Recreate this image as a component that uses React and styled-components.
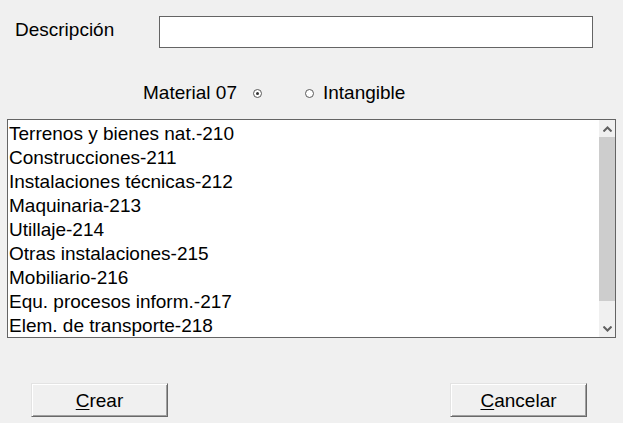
import styled, { createGlobalStyle } from "styled-components";

const GlobalStyle = createGlobalStyle`
  html, body {
    margin: 0;
    padding: 0;
    background: #f0f0f0;
  }
  #root {
    width: 623px;
    height: 423px;
    overflow: hidden;
  }
`;

const items = [
  "Terrenos y bienes nat.-210",
  "Construcciones-211",
  "Instalaciones técnicas-212",
  "Maquinaria-213",
  "Utillaje-214",
  "Otras instalaciones-215",
  "Mobiliario-216",
  "Equ. procesos inform.-217",
  "Elem. de transporte-218",
];

export default function App() {
  return (
    <>
      <GlobalStyle />
      <Dialog>
        <FieldRow>
          <Label>Descripción</Label>
          <TextBox type="text" />
        </FieldRow>

        <RadioRow>
          <RadioLabel>Material 07</RadioLabel>
          <Radio $checked $before={16} $after={0} />
          <Radio $before={43} $after={9} />
          <RadioLabel>Intangible</RadioLabel>
        </RadioRow>

        <ListBox>
          <ListItems>
            {items.map((item) => (
              <Item key={item}>{item}</Item>
            ))}
          </ListItems>
          <ScrollBar>
            <ArrowBox>
              <Chevron viewBox="0 0 9 6">
                <path d="M0.5 5.5 L4.5 1.5 L8.5 5.5" />
              </Chevron>
            </ArrowBox>
            <Track>
              <Thumb />
            </Track>
            <ArrowBox>
              <Chevron viewBox="0 0 9 6">
                <path d="M0.5 0.5 L4.5 4.5 L8.5 0.5" />
              </Chevron>
            </ArrowBox>
          </ScrollBar>
        </ListBox>

        <ButtonRow>
          <Button>
            <u>C</u>rear
          </Button>
          <Button>
            <u>C</u>ancelar
          </Button>
        </ButtonRow>
      </Dialog>
    </>
  );
}

const Dialog = styled.div`
  height: 423px;
  display: flex;
  flex-direction: column;
  background: #f0f0f0;
  font-family: "Liberation Sans", Arial, sans-serif;
  font-size: 19px;
  color: #000;
`;

const FieldRow = styled.div`
  display: flex;
  align-items: center;
  margin-top: 16px;
  padding-left: 15px;
  height: 32px;
`;

const Label = styled.span`
  width: 144px;
  margin-top: -5px;
`;

const TextBox = styled.input`
  box-sizing: border-box;
  width: 434px;
  height: 32px;
  margin: 0;
  border: 1px solid #646464;
  background: #fff;
  outline: none;
`;

const RadioRow = styled.div`
  display: flex;
  align-items: center;
  margin-top: 34px;
  padding-left: 143px;
  height: 22px;
`;

const RadioLabel = styled.span`
  line-height: 22px;
`;

const Radio = styled.span`
  position: relative;
  box-sizing: border-box;
  width: 9px;
  height: 9px;
  border-radius: 50%;
  border: 1px solid #5a5a5a;
  background: #fff;
  margin: 0 ${({ $after }) => $after}px 0 ${({ $before }) => $before}px;

  &::after {
    content: "";
    display: ${({ $checked }) => ($checked ? "block" : "none")};
    position: absolute;
    left: 2px;
    top: 2px;
    width: 3px;
    height: 3px;
    border-radius: 50%;
    background: #333;
  }
`;

const ListBox = styled.div`
  box-sizing: border-box;
  display: flex;
  margin: 15px 0 0 7px;
  width: 609px;
  height: 219px;
  border: 1px solid #646464;
  background: #fff;
`;

const ListItems = styled.div`
  flex: 1;
  padding: 1px 0 0 1px;
  overflow: hidden;
`;

const Item = styled.div`
  height: 24px;
  line-height: 26px;
  white-space: nowrap;
`;

const ScrollBar = styled.div`
  width: 16px;
  display: flex;
  flex-direction: column;
  background: #f0f0f0;
`;

const ArrowBox = styled.div`
  height: 17px;
  display: flex;
  align-items: center;
  justify-content: center;
`;

const Chevron = styled.svg`
  width: 9px;
  height: 6px;
  fill: none;
  stroke: #606060;
  stroke-width: 2;
`;

const Track = styled.div`
  flex: 1;
  display: flex;
  flex-direction: column;
`;

const Thumb = styled.div`
  height: 164px;
  background: #cdcdcd;
`;

const ButtonRow = styled.div`
  display: flex;
  justify-content: space-between;
  margin-top: 45px;
  padding: 0 36px 0 31px;
`;

const Button = styled.button`
  box-sizing: border-box;
  width: 137px;
  height: 34px;
  margin: 0;
  padding: 1px 0 0;
  font: inherit;
  color: #000;
  background: #f0f0f0;
  border-top: 1px solid #e3e3e3;
  border-left: 1px solid #e3e3e3;
  border-right: 1px solid #696969;
  border-bottom: 1px solid #696969;
  box-shadow: inset 1px 1px 0 #fff, inset -1px -1px 0 #a0a0a0;

  u {
    text-decoration-thickness: 1px;
    text-underline-offset: 2px;
  }
`;
